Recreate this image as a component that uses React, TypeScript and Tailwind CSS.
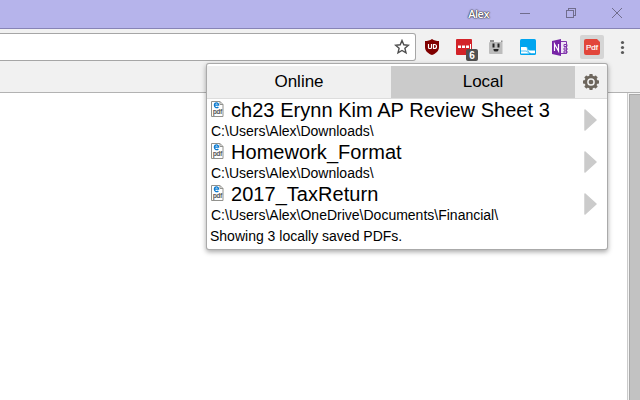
import React from "react";

const files = [
  { name: "ch23 Erynn Kim AP Review Sheet 3", path: "C:\\Users\\Alex\\Downloads\\" },
  { name: "Homework_Format", path: "C:\\Users\\Alex\\Downloads\\" },
  { name: "2017_TaxReturn", path: "C:\\Users\\Alex\\OneDrive\\Documents\\Financial\\" },
];

function WindowControls() {
  return (
    <svg width="112" height="28" viewBox="0 0 112 28" fill="none" stroke="#706d8d" shapeRendering="crispEdges">
      <path d="M0 13.5h10M46.5 10.5h7v7h-7zM48.5 10V8.5h7v7H54" />
      <path d="M92 8l10 10M102 8L92 18" shapeRendering="auto" />
    </svg>
  );
}

function PdfPageIcon() {
  return (
    <svg width="13" height="17" viewBox="0 0 13 17" className="block shrink-0">
      <path d="M.5.5h8.500l3 3v12H.5z" fill="#fff" stroke="#92928e" />
      <path d="M9 .5v3h3" fill="none" stroke="#92928e" />
      <path d="M4 4.200h3.600C7.600 1.200 3.400 1.200 3.400 4.300c0 2.600 2.700 2.700 4 1.800" fill="none" stroke="#0879d0" strokeWidth="1.300" />
      <text x="2" y="12.6" fontSize="6.500" textLength="9" fill="#444" stroke="#444" strokeWidth=".2">pdf</text>
    </svg>
  );
}

function GearIcon() {
  return (
    <svg width="16" height="16" viewBox="0 0 16 16">
      <g fill="#6d665d">
        <circle cx="8" cy="8" r="6.500" />
        {[0, 45, 90, 135].map((a) => (
          <rect key={a} x="6.3" y="0" width="3.4" height="16" rx="0.7" transform={`rotate(${a} 8 8)`} />
        ))}
      </g>
      <circle cx="8" cy="8" r="3.1" fill="none" stroke="#f1f1f1" strokeWidth="1.5" />
    </svg>
  );
}

function Extensions() {
  return (
    <svg width="224" height="32" viewBox="416 32 224 32" className="block shrink-0">
      <path d="M432 39c2 1.4 4.500 2 7 2v6c0 4-3 6.500-7 8-4-1.500-7-4-7-8v-6c2.500 0 5-.6 7-2z" fill="#800000" />
      <path d="M428.500 44v3.500q0 1 1 1h1q1 0 1-1V44M433.500 44.500v4h1q2 0 2-2t-2-2z" fill="none" stroke="#fff" strokeWidth="1.200" />
      <rect x="456" y="39" width="16" height="16" rx="1" fill="#d32329" />
      <path d="M458 45.500h3v2.500h-3zM462 45.500h3v2.500h-3zM466 45.500h3v2.500h-3zM470 44h1v5h-1z" fill="#fff" />
      <rect x="466" y="49" width="12" height="12" rx="2" fill="#505050" />
      <text x="472" y="59" textAnchor="middle" fontSize="10" fontWeight="bold" fill="#fff">6</text>
      <path d="M490 42h12.500v12h-12.500q-1 0-1-1V43q0-1 1-1z" fill="#bcbcbc" />
      <path d="M490 40h4v2h-4zM501 42v-1.500h1.500V42z" fill="#909090" />
      <path d="M492.500 43.500h2v4h-2zM497.500 43.500h2v4h-2zM493.500 49h5v1q0 1.500-2.500 1.500t-2.500-1.500z" fill="#242424" />
      <rect x="520" y="39" width="16" height="16" rx="1.500" fill="#00a5ef" />
      <path d="M521 47h14v6.500h-14z" fill="#fff" />
      <path d="M526.500 47c1.500 0 1 3.500 3.500 3.500h5V47z" fill="#00a5ef" />
      <path d="M521 51h5c2 0 1.800 2.800 4.500 2.800h4.500M527 47l1 4q1 2.500 3 2.500" fill="none" stroke="#00a5ef" strokeWidth=".7" />
      <path d="M559.500 41.500h7v12h-7zM564 44.500h3v2h-3zM564 48h3v2h-3zM564 51h3v2h-3z" fill="#eee4f5" stroke="#8137ac" />
      <path d="M552 41l9-2v17l-9-2z" fill="#7724a6" />
      <path d="M554.500 51v-7l4 7v-7" fill="none" stroke="#fff" strokeWidth="1.200" />
      <rect x="580" y="35" width="24" height="24" rx="2" fill="#d5d5d5" />
      <path d="M586 39h12l2 2v12q0 2-2 2h-12q-2 0-2-2V41q0-2 2-2z" fill="#e2453a" />
      <path d="M597 39l3 3v-3z" fill="#d5d5d5" />
      <text x="586" y="50" fontSize="8" textLength="12" fill="#fff" stroke="#fff" strokeWidth=".2">Pdf</text>
      <g fill="#595959"><circle cx="622.500" cy="42.500" r="1.600" /><circle cx="622.500" cy="47.500" r="1.600" /><circle cx="622.500" cy="52.500" r="1.600" /></g>
    </svg>
  );
}

export default function App() {
  return (
    <main className="relative flex h-[400px] w-[640px] flex-col overflow-hidden bg-white font-['Liberation_Sans',Arial,sans-serif] text-black">
      <header className="flex h-[29px] shrink-0 items-start justify-end border-b border-[#8784b6] bg-[#b6b4eb]">
        <span className="mt-[7px] mr-[31px] font-['Open_Sans',sans-serif] text-[11px] leading-[14px] font-semibold tracking-[-0.5px] text-white [text-shadow:0_0_1px_#333,0_0_1px_#333,0_0_2px_#333]">Alex</span>
        <WindowControls />
        <div className="w-[8px]" />
      </header>
      <div className="flex h-[35px] shrink-0 bg-[#f1f1f1] pt-[3px]">
        <div className="mt-px flex h-[28px] w-[416px] items-center justify-end rounded-r-[3px] border border-l-0 border-[#a6a6a6] bg-white pr-[5px]">
          <svg width="16" height="16" viewBox="0 0 16 16" fill="none" stroke="#4d4d4d" strokeWidth="1.400">
            <path d="M8 1.500l1.800 4.300 4.700.4-3.600 3.100 1.100 4.600L8 11.500l-4 2.400 1.100-4.600L1.500 6.200l4.700-.4z" />
          </svg>
        </div>
        <Extensions />
      </div>
      <div className="h-[29px] shrink-0 border-b border-[#b2b2b2] bg-[#f1f1f1]" />
      <div className="flex flex-1 justify-end">
        <div className="w-[13px] border-l border-[#cbcbcb] bg-[#f5f5f5] pt-px pl-px">
          <div className="h-full w-[11px] border border-r-0 border-b-0 border-[#aaa] bg-[#c2c2c2]" />
        </div>
      </div>
      <section className="absolute top-[64px] left-[207px] h-[185px] w-[400px] rounded-[2px] bg-white pt-[2px] shadow-[0_0_0_1px_#aaa,0_2px_5px_1px_rgba(0,0,0,.35)]">
        <nav className="flex h-[33px] border-b border-[#ddd] bg-[#f0f0f0] text-[17px] leading-[20px]">
          <button className="flex w-[184px] justify-center pt-[6px]">Online</button>
          <button className="flex w-[184px] justify-center bg-[#cbcbcb] pt-[6px]">Local</button>
          <button className="flex w-[32px] items-center justify-center"><GearIcon /></button>
        </nav>
        {files.map((file) => (
          <article key={file.name} className="flex h-[42px] justify-between pr-[10px] pl-[4px]">
            <div className="whitespace-nowrap">
              <div className="flex h-[24px] gap-[7px] text-[20px] leading-[22px] tracking-[0.04px]">
                <div className="pt-[2px]"><PdfPageIcon /></div>
                <span>{file.name}</span>
              </div>
              <p className="text-[14px] leading-[16px]">{file.path}</p>
            </div>
            <svg width="13" height="22" viewBox="0 0 13 22" className="mt-[10px]">
              <path d="M1 1l11 10L1 21z" fill="#cbcbcb" stroke="#cbcbcb" strokeWidth="1.500" strokeLinejoin="round" />
            </svg>
          </article>
        ))}
        <p className="pt-[3px] pl-[3px] text-[14px] leading-[16px]">Showing 3 locally saved PDFs.</p>
      </section>
    </main>
  );
}
